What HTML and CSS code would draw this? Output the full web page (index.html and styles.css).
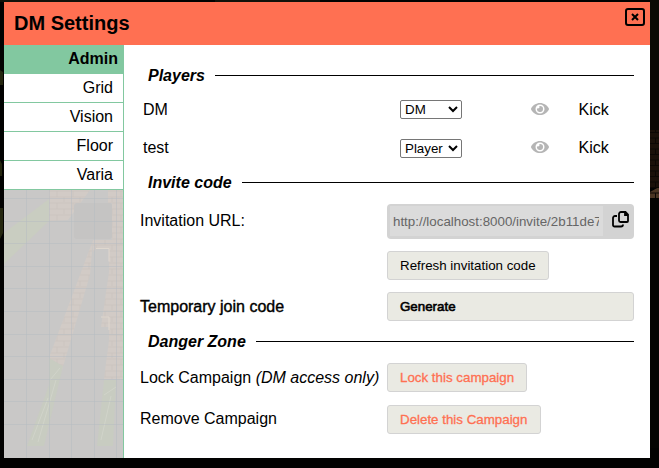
FILE: index.html
```html
<!DOCTYPE html>
<html lang="en">
<head>
<meta charset="utf-8">
<title>DM Settings</title>
<link rel="stylesheet" href="styles.css">
</head>
<body>
<svg class="map" viewBox="0 0 659 468" aria-hidden="true">
  <defs>
    <pattern id="bricks" width="14" height="11" patternUnits="userSpaceOnUse">
      <path d="M0 .5H14M0 6H14M4.500 0V6M11.500 6V11" fill="none" stroke="#0c0704"/>
    </pattern>
  </defs>
  <rect width="659" height="468" fill="#020201"/>
  <path d="M0 0H100V2H0zM215 0H320V2H215z" fill="#11120a"/>
  <path d="M0 70l3 2v13H0zM0 160l2 4v12H0zM0 208h3v25l-3 6z" fill="#24260f"/>
  <path d="M650 0h9v60h-9z" fill="#090b04"/>
  <path d="M650 60h9v70h-9z" fill="#0a0604"/>
  <path d="M650 130h9v58h-9z" fill="#1a1009"/>
  <path d="M650 192l9-5v11h-9z" fill="#4a3523"/>
  <path d="M650 130h9v68h-9z" fill="url(#bricks)"/>
  <path d="M650 198h9v250h-9z" fill="#040402"/>
</svg>
<main class="dialog">
  <header class="dialog-header">
    <h1>DM Settings</h1>
    <svg class="close" viewBox="0 0 20 18"><rect x="1" y="1" width="18" height="16" rx="2"/><path d="M7 6l6 6M13 6l-6 6"/></svg>
  </header>
  <div class="dialog-body">
    <nav class="sidebar">
      <a class="tab active">Admin</a>
      <a class="tab">Grid</a>
      <a class="tab">Vision</a>
      <a class="tab">Floor</a>
      <a class="tab">Varia</a>
      <svg class="scene" viewBox="0 0 119 268" preserveAspectRatio="none" aria-hidden="true">
        <defs>
          <pattern id="stones" width="16" height="12" patternUnits="userSpaceOnUse">
            <rect width="16" height="12" fill="#d2cbc6"/>
            <path d="M0 1H16M0 7H16M5 1V7M12 7V13" fill="none" stroke="#cac3be" stroke-width=".8"/>
          </pattern>
        </defs>
        <rect width="119" height="268" fill="#c9c8c7"/>
        <path d="M45 0H86L64 30 45 31zM104 0h15v189h-19l5-39v-13h-8l8-55V58H93l-4 4V50h19V13h-4zM89 50L86 85 58 180l-12 4V165z" fill="url(#stones)"/>
        <path d="M0 43L45 9V31L0 74z" fill="#c9cdc1"/>
        <path d="M45 168l14 8-19 80H23l22-61zM100 190h12l-3 66H93z" fill="#c8ccc1"/>
        <path d="M28 250l16-42M34 252l18-62M46 190l10-12M97 250l10-44M100 205l12-8" fill="none" stroke="#d1d4ca"/>
        <path d="M92 58.500h13v13M97 127h8v13" fill="none" stroke="#dfd7ce"/>
        <rect x="70" y="13" width="38" height="36" rx="3" fill="#c5c4c3"/>
        <path d="M0 8.500H119M0 31.500H119M0 53.500H119M0 76.500H119M0 98.500H119M0 121.500H119M0 144.500H119M0 166.500H119M0 189.500H119M0 211.500H119M0 234.500H119M22.500 0V268M45.500 0V268M67.500 0V268M90.500 0V268M112.500 0V268" fill="none" stroke="#b5bbc2" stroke-opacity=".5"/>
      </svg>
    </nav>
    <section class="panel">
      <h2 class="section-title first">Players</h2>
      <div class="player">
        <span class="name">DM</span>
        <select><option>Player</option><option selected>DM</option></select>
        <svg class="eye" viewBox="0 0 576 512"><path d="M572.520 241.400C518.290 135.590 410.930 64 288 64S57.680 135.640 3.480 241.410a32.350 32.350 0 0 0 0 29.190C57.710 376.410 165.070 448 288 448s230.320-71.640 284.520-177.410a32.350 32.350 0 0 0 0-29.190zM288 400a144 144 0 1 1 144-144 143.930 143.930 0 0 1-144 144zm0-240a95.310 95.310 0 0 0-25.310 3.790 47.850 47.850 0 0 1-66.900 66.900A95.780 95.780 0 1 0 288 160z"/></svg>
        <span class="kick">Kick</span>
      </div>
      <div class="player">
        <span class="name">test</span>
        <select class="low"><option selected>Player</option><option>DM</option></select>
        <svg class="eye" viewBox="0 0 576 512"><path d="M572.520 241.400C518.290 135.590 410.930 64 288 64S57.680 135.640 3.480 241.410a32.350 32.350 0 0 0 0 29.190C57.710 376.410 165.070 448 288 448s230.320-71.640 284.520-177.410a32.350 32.350 0 0 0 0-29.190zM288 400a144 144 0 1 1 144-144 143.930 143.930 0 0 1-144 144zm0-240a95.310 95.310 0 0 0-25.310 3.790 47.850 47.850 0 0 1-66.900 66.900A95.780 95.780 0 1 0 288 160z"/></svg>
        <span class="kick">Kick</span>
      </div>
      <h2 class="section-title"><span class="lower">Invite code</span></h2>
      <div class="row">
        <span class="raised">Invitation URL:</span>
        <div class="url-box">
          <div class="url"><div class="url-text">http://localhost:8000/invite/2b11de7</div></div>
          <svg class="copy" viewBox="0 0 18 17"><path d="M9 1h4.500L16 3.500V10a1 1 0 0 1-1 1H8.500a1.500 1.500 0 0 1-1.500-1.500V3a2 2 0 0 1 2-2zM13 1v3h3M5 5H3a2 2 0 0 0-2 2v7a1.500 1.500 0 0 0 1.500 1.500H9a2 2 0 0 0 2-2"/></svg>
        </div>
      </div>
      <div class="row"><span></span><button>Refresh invitation code</button></div>
      <div class="row strong"><span>Temporary join code</span><button class="wide">Generate</button></div>
      <h2 class="section-title">Danger Zone</h2>
      <div class="row"><span>Lock Campaign <i>(DM access only)</i></span><button class="danger">Lock this campaign</button></div>
      <div class="row"><span class="raised">Remove Campaign</span><button class="danger delete">Delete this Campaign</button></div>
    </section>
  </div>
</main>
</body>
</html>
```
FILE: styles.css
```css
* { box-sizing: border-box; }
body {
  margin: 0;
  height: 468px;
  padding: 2px 9px 10px 4px;
  overflow: hidden;
  background: #020201;
  color: #000;
  font: 16px/18px "Liberation Sans", Arial, sans-serif;
}
.map { position: absolute; inset: 0; width: 659px; height: 468px; }
.dialog { position: relative; width: 646px; height: 456px; display: flex; flex-direction: column; }
.dialog-header {
  height: 43px;
  padding: 0 5px 0 10px;
  display: flex;
  align-items: center;
  justify-content: space-between;
  background: #ff7052;
}
h1 { margin: -2px 0 0; font-size: 20px; line-height: 24px; }
.close { width: 20px; height: 18px; align-self: flex-start; margin-top: 6px; fill: none; stroke: #000; stroke-width: 2; }
.dialog-body { flex: 1; display: flex; min-height: 0; }
.sidebar { width: 120px; display: flex; flex-direction: column; border-right: 1px solid #82c8a0; }
.tab {
  height: 29px;
  flex: none;
  padding: 5px 10px 0 0;
  background: #fff;
  border-bottom: 1px solid #82c8a0;
  text-align: right;
}
.tab.active { background: #82c8a0; font-weight: bold; padding-right: 5px; }
.scene { display: block; width: 119px; height: 268px; }
.panel {
  flex: 1;
  padding: 15px 16px 0;
  background: #fff;
  display: grid;
  grid-template-rows: 30px 38px 38px 32px 47px 41px 41px 29px 43px 41px;
}
.section-title {
  margin: 0;
  padding-left: 8px;
  display: flex;
  align-items: center;
  gap: 10px;
  font-size: 16px;
  font-style: italic;
}
.section-title::after { content: ""; flex: 1; height: 1px; background: #000; }
.first { padding-top: 1px; }
.lower { padding-top: 2px; }
.player { display: grid; grid-template-columns: 260px 131px 47.5px 1fr; align-items: center; }
.name { padding: 2px 0 0 3px; }
.kick { padding-top: 2px; }
select {
  width: 62px;
  height: 19px;
  background: #fff;
  color: #000;
  border: 1px solid #767676;
  border-radius: 2px;
  font: 13.333px "Liberation Sans", Arial, sans-serif;
}
.low { margin-top: 2px; }
.eye { width: 18px; height: 16px; fill: #b5b5b5; }
.row { display: grid; grid-template-columns: 247px 247px; align-items: center; white-space: nowrap; }
.raised { padding-bottom: 2px; }
.url-box {
  height: 35px;
  padding: 2px 4px 3px 3px;
  display: flex;
  align-items: center;
  justify-content: space-between;
  background: #d3d3d3;
  border-radius: 4px;
}
.url { width: 213px; height: 30px; padding: 0 4px 0 3px; background: #dbdbdb; }
.url-text {
  overflow: hidden;
  color: #666;
  font-size: 13.333px;
  line-height: 31px;
}
.copy { width: 18px; height: 17px; margin-top: -4px; fill: none; stroke: #000; stroke-width: 1.8; }
button {
  justify-self: start;
  height: 29px;
  padding: 0 12px;
  background: #eaeae3;
  border: 1px solid #d3d3d3;
  border-radius: 3px;
  color: #000;
  text-align: left;
  font: 13.333px "Liberation Sans", Arial, sans-serif;
}
.wide { width: 247px; }
.delete { width: 154px; }
.strong, .strong button { -webkit-text-stroke: .4px #000; }
.strong .wide { -webkit-text-stroke-width: .6px; }
.row .danger { color: #ff7052; -webkit-text-stroke: .3px #ff7052; }
```
